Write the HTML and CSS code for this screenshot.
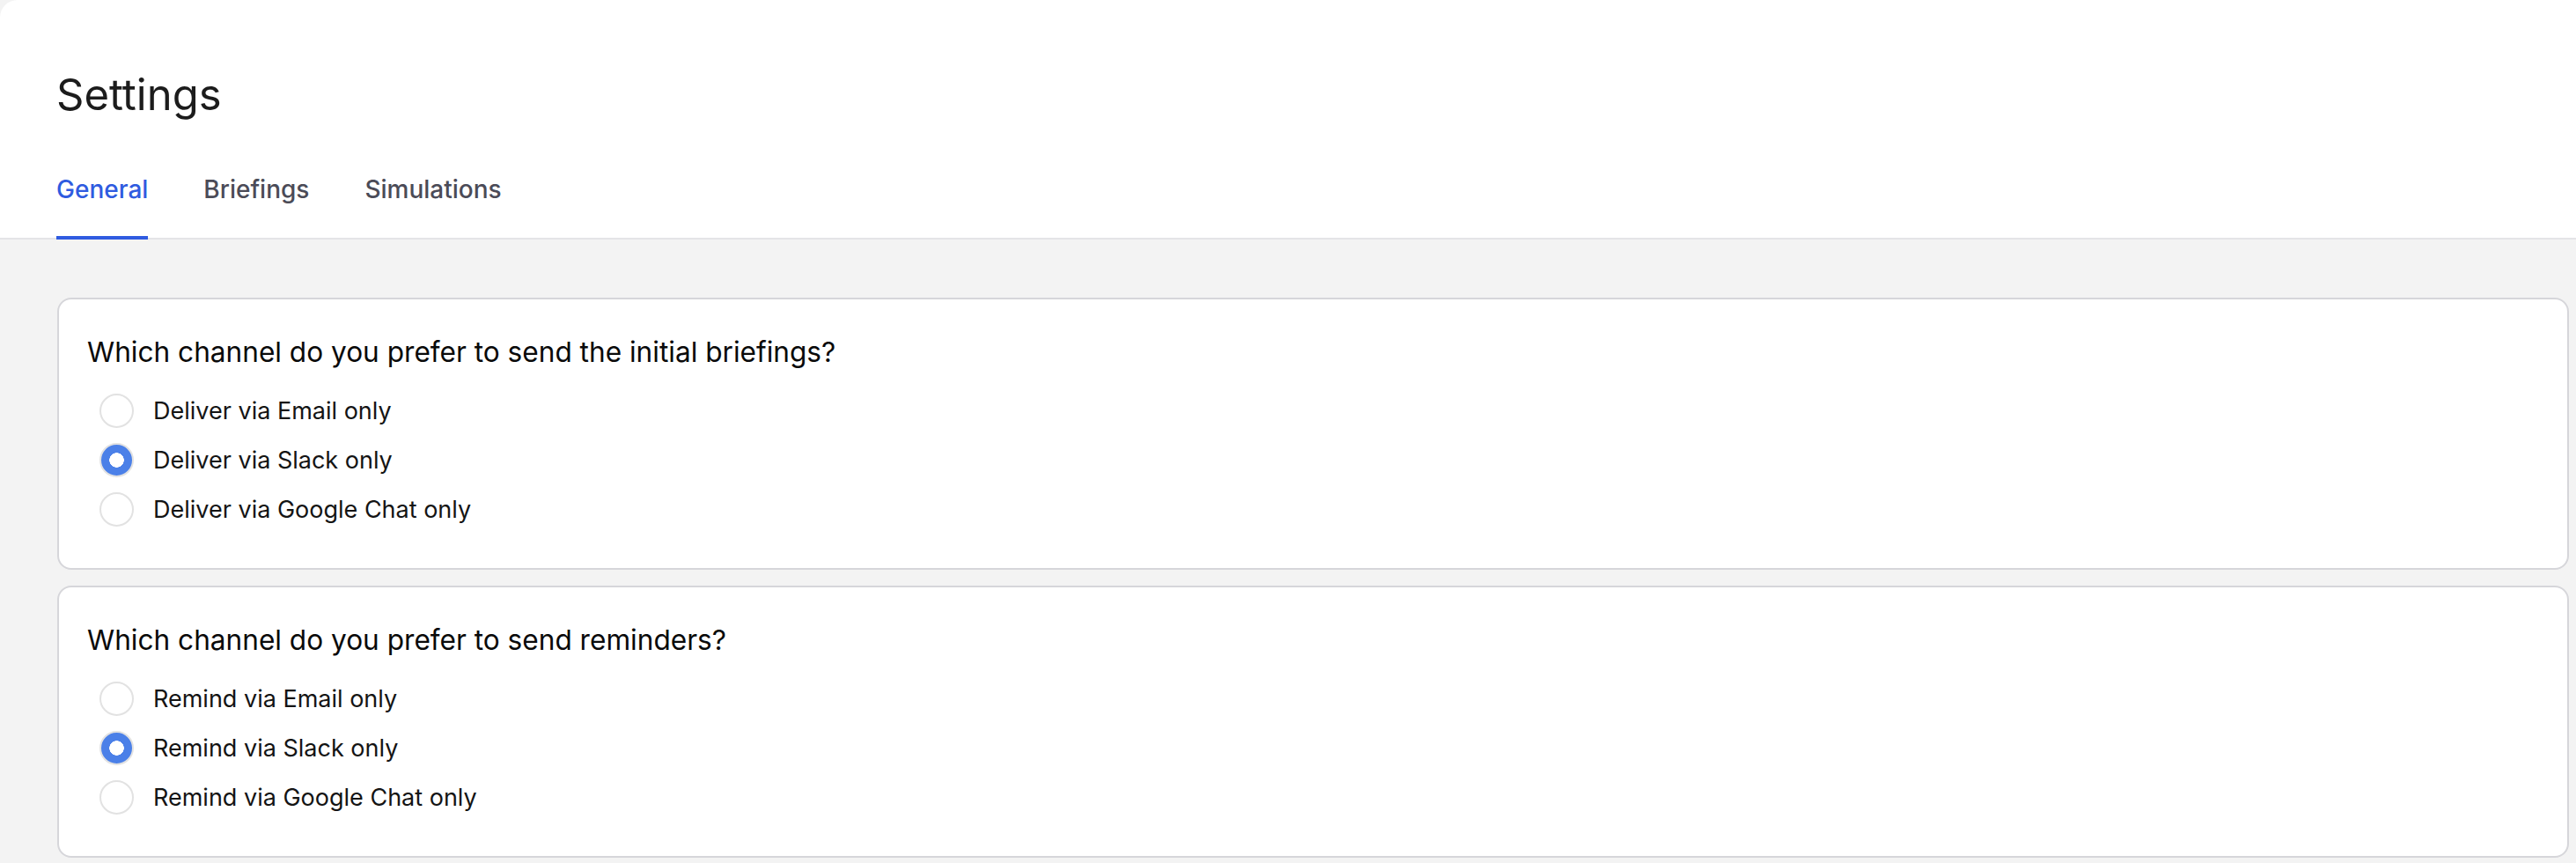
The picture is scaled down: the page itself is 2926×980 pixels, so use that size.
FILE: index.html
```html
<!DOCTYPE html>
<html lang="en">
<head>
  <meta charset="UTF-8">
  <meta name="viewport" content="width=device-width, initial-scale=1.0">
  <title>Settings</title>
  <link rel="stylesheet" href="styles.css">
</head>
<body>
  <div class="page">
    <div class="page-header">
      <h1 class="page-title">Settings</h1>
      <nav class="tabs">
        <a class="tab active" href="#">General</a>
        <a class="tab" href="#">Briefings</a>
        <a class="tab" href="#">Simulations</a>
      </nav>
    </div>

    <div class="page-body">
      <div class="card">
        <h3 class="question">Which channel do you prefer to send the initial briefings?</h3>
        <div class="options">
          <label class="option"><input type="radio" name="briefingChannel" value="email"> Deliver via Email only</label>
          <label class="option"><input type="radio" name="briefingChannel" value="slack" checked> Deliver via Slack only</label>
          <label class="option"><input type="radio" name="briefingChannel" value="gchat"> Deliver via Google Chat only</label>
        </div>
      </div>

      <div class="card">
        <h3 class="question">Which channel do you prefer to send reminders?</h3>
        <div class="options">
          <label class="option"><input type="radio" name="reminderChannel" value="email"> Remind via Email only</label>
          <label class="option"><input type="radio" name="reminderChannel" value="slack" checked> Remind via Slack only</label>
          <label class="option"><input type="radio" name="reminderChannel" value="gchat"> Remind via Google Chat only</label>
        </div>
      </div>
    </div>
  </div>
</body>
</html>
```

FILE: styles.css
```css
body {
  font-family: Inter, "Noto Sans", sans-serif;
  margin: 0;
  background-color: #f3f3f3;
  color: #1a1a1a;
}

.page {
  min-height: 100vh;
  background-color: #f3f3f3;
}

.page-header {
  background-color: #fff;
  border-top-left-radius: 20px;
  padding: 80px 64px 0;
  border-bottom: 2px solid #e4e4e7;
}

.page-title {
  margin: 0 0 59px;
  font-size: 49px;
  line-height: 56px;
  font-weight: 400;
  color: #1c1c1c;
}

.tabs {
  display: flex;
  gap: 63px;
  margin-bottom: -2px;
}

.tab {
  font-size: 28px;
  line-height: 40px;
  font-weight: 500;
  color: #4b4b57;
  text-decoration: none;
  padding-bottom: 33px;
  border-bottom: 4px solid transparent;
}

.tab.active {
  color: #2f5be0;
  border-bottom-color: #2f5be0;
}

.page-body {
  padding: 66px 8px 8px 65px;
  display: flex;
  flex-direction: column;
  gap: 18px;
}

.card {
  background-color: #fff;
  border: 2px solid #d6d6da;
  border-radius: 16px;
  padding: 40px 32px 48px;
}

.question {
  margin: 0 0 27px;
  font-size: 31.6px;
  line-height: 40px;
  font-weight: 400;
  color: #0a0a0a;
}

.options {
  display: flex;
  flex-direction: column;
  gap: 18px;
  padding-left: 14px;
}

.option {
  display: flex;
  align-items: center;
  gap: 22px;
  height: 38px;
  font-size: 27px;
  color: #141414;
}

/* custom radio: gray ring, blue fill with white dot when checked */
.option input {
  appearance: none;
  margin: 0;
  width: 39px;
  height: 39px;
  border-radius: 50%;
  border: 2px solid #e2e2e2;
  background-color: #fff;
}

.option input:checked {
  background: radial-gradient(circle, #fff 0 8px, #4b80e8 8.5px);
}
```
